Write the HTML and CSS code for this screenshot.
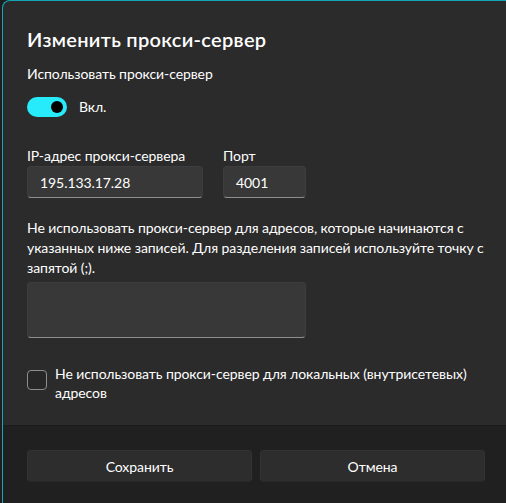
FILE: index.html
```html
<!DOCTYPE html>
<html lang="ru">
<head>
<meta charset="utf-8">
<title>Изменить прокси-сервер</title>
<link rel="stylesheet" href="styles.css">
</head>
<body>
<div class="dialog">
  <div class="content">
    <h1 class="title">Изменить прокси-сервер</h1>
    <div class="label">Использовать прокси-сервер</div>
    <div class="toggle-row">
      <span class="toggle"><span class="knob"></span></span>
      <span class="toggle-text">Вкл.</span>
    </div>
    <div class="fields">
      <div class="field">
        <div class="field-label">IP-адрес прокси-сервера</div>
        <div class="input">195.133.17.28</div>
      </div>
      <div class="field">
        <div class="field-label">Порт</div>
        <div class="input">4001</div>
      </div>
    </div>
    <p class="desc">Не использовать прокси-сервер для адресов, которые начинаются с указанных ниже записей. Для разделения записей используйте точку с запятой (;).</p>
    <div class="textarea"></div>
    <div class="check-row">
      <span class="checkbox"></span>
      <span class="check-label">Не использовать прокси-сервер для локальных (внутрисетевых) адресов</span>
    </div>
  </div>
  <div class="footer">
    <button class="btn">Сохранить</button>
    <button class="btn">Отмена</button>
  </div>
</div>
</body>
</html>
```
FILE: styles.css
```css
html, body {
  margin: 0;
  padding: 0;
  height: 503px;
  overflow: hidden;
  background: #1e1e1e;
}

body {
  font-family: Lato, "Noto Sans", sans-serif;
  font-size: 14px;
  letter-spacing: -0.07px;
  color: #ffffff;
}

.dialog {
  box-sizing: border-box;
  width: 507px;
  margin-left: 2px;
  border-top: 1px solid #14a7b8;
  border-left: 1px solid #14a7b8;
  border-top-left-radius: 8px;
  background: #2b2b2b;
  overflow: hidden;
}

.content {
  padding: 24px 24px 23px 24px;
}

.title {
  margin: 0 0 11px 0;
  font-size: 20px;
  font-weight: 600;
  line-height: 28px;
  letter-spacing: 0.3px;
}

.label {
  line-height: 20px;
}

.toggle-row {
  margin-top: 7px;
  height: 32px;
  display: flex;
  align-items: center;
  gap: 12px;
}

.toggle {
  width: 40px;
  height: 20px;
  border-radius: 10px;
  background: #27eafb;
  display: flex;
  align-items: center;
  justify-content: flex-end;
  padding-right: 4px;
  box-sizing: border-box;
}

.knob {
  width: 12px;
  height: 12px;
  border-radius: 50%;
  background: #000000;
}

.toggle-text {
  line-height: 20px;
}

.fields {
  margin-top: 23px;
  display: grid;
  grid-template-columns: 176px 83px;
  column-gap: 20px;
}

.field-label {
  line-height: 20px;
}

.input {
  box-sizing: border-box;
  height: 32px;
  padding: 0 12px;
  display: flex;
  align-items: center;
  background: #383838;
  border: 1px solid #3d3d3d;
  border-bottom-color: #8f8f8f;
  border-radius: 4px;
}

.desc {
  margin: 20px 0 0 0;
  line-height: 20px;
}

.textarea {
  box-sizing: border-box;
  margin-top: 4px;
  width: 279px;
  height: 56px;
  background: #383838;
  border: 1px solid #3d3d3d;
  border-bottom-color: #8f8f8f;
  border-radius: 4px;
}

.check-row {
  margin-top: 26px;
  display: flex;
  align-items: flex-start;
  gap: 8px;
}

.checkbox {
  flex: none;
  box-sizing: border-box;
  width: 20px;
  height: 20px;
  margin-top: 6px;
  border: 1px solid #8e8e8e;
  border-radius: 4px;
  background: #272727;
}

.check-label {
  line-height: 19px;
}

.footer {
  border-top: 1px solid #1c1c1c;
  background: #202020;
  padding: 24px 24px 40px 24px;
  display: grid;
  grid-template-columns: 1fr 1fr;
  column-gap: 8px;
}

.btn {
  height: 32px;
  font: inherit;
  letter-spacing: inherit;
  color: #ffffff;
  background: #2d2d2d;
  border: 1px solid #333333;
  border-bottom-color: #2a2a2a;
  border-radius: 4px;
  padding: 0;
}
```
